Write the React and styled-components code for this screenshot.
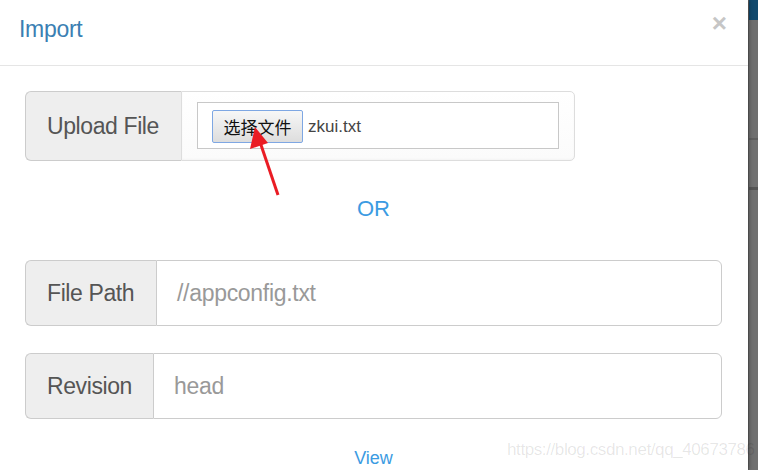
import styled, { createGlobalStyle } from "styled-components";

const Global = createGlobalStyle`
  html, body {
    margin: 0;
    padding: 0;
    background: #6f6f6f;
  }
  body {
    font-family: "Liberation Sans", Arial, "Noto Sans CJK SC", sans-serif;
  }
`;

const Page = styled.div`
  position: relative;
  width: 758px;
  height: 470px;
  display: flex;
  overflow: hidden;
`;

const Modal = styled.div`
  width: 748px;
  height: 100%;
  background: #fff;
  box-shadow: 1px 0 4px rgba(0, 0, 0, 0.35);
  display: flex;
  flex-direction: column;
  position: relative;
  z-index: 1;
`;

const Header = styled.div`
  height: 65px;
  border-bottom: 1px solid #e5e5e5;
  display: flex;
  align-items: center;
  justify-content: space-between;
  padding: 0 21px 0 19px;
`;

const Title = styled.h4`
  margin: 0;
  font-size: 23px;
  font-weight: normal;
  color: #3b7fb3;
  letter-spacing: -0.3px;
  margin-top: -6px;
`;

const Close = styled.span`
  font-size: 26px;
  font-weight: bold;
  color: #c6c6c6;
  margin-top: -19px;
`;

const Body = styled.div`
  padding: 25px 26px 0 25px;
  display: flex;
  flex-direction: column;
`;

const Group = styled.div`
  display: flex;
  height: ${(p) => p.$h}px;
  width: ${(p) => (p.$w ? `${p.$w}px` : "auto")};
  margin-top: ${(p) => p.$mt || 0}px;
`;

const Addon = styled.div`
  width: ${(p) => p.$w}px;
  flex: none;
  box-sizing: border-box;
  background: #eeeeee;
  border: 1px solid #cccccc;
  border-right: none;
  border-radius: 6px 0 0 6px;
  display: flex;
  align-items: center;
  padding-left: 21px;
  font-size: 23px;
  letter-spacing: -0.4px;
  color: #555;
`;

const FileBox = styled.div`
  flex: 1;
  border: 1px solid #dddddd;
  border-radius: 0 5px 5px 0;
  background: linear-gradient(#ffffff, #fbfbfb);
  box-shadow: inset 0 -1px 2px rgba(0, 0, 0, 0.03);
  padding: 10px 15px 11px 15px;
  display: flex;
`;

const FileInput = styled.div`
  flex: 1;
  border: 1px solid #c8c8c8;
  background: #fff;
  display: flex;
  align-items: center;
  padding-left: 14px;
  padding-top: 2px;
  gap: 5px;
`;

const PickButton = styled.button`
  width: 91px;
  height: 33px;
  box-sizing: border-box;
  border: 1px solid #7ea7e3;
  border-radius: 2px;
  background: linear-gradient(#f7f7f7, #dddddd);
  font-family: "Noto Sans CJK SC", sans-serif;
  font-size: 17px;
  color: #111;
  padding: 0;
  line-height: 1;
`;

const FileName = styled.span`
  font-size: 17px;
  color: #444;
`;

const TextInput = styled.div`
  flex: 1;
  border: 1px solid #cccccc;
  border-radius: 0 6px 6px 0;
  display: flex;
  align-items: center;
  padding-left: ${(p) => p.$pl}px;
  font-size: 23px;
  letter-spacing: -0.3px;
  color: #999;
`;

const Center = styled.div`
  text-align: center;
  color: #3b9be2;
  font-size: ${(p) => p.$size}px;
  margin-top: ${(p) => p.$mt}px;
  height: ${(p) => p.$h}px;
  line-height: ${(p) => p.$h}px;
`;

const Backdrop = styled.div`
  flex: 1;
  display: flex;
  flex-direction: column;
  background: #707070;
  border-left: 1px solid #5e5e5e;
`;

const Band = styled.div`
  height: ${(p) => p.$h}px;
  background: ${(p) => p.$c};
  flex: none;
`;

const Arrow = styled.svg`
  position: absolute;
  left: 240px;
  top: 120px;
  z-index: 2;
`;

const Watermark = styled.div`
  position: absolute;
  left: 507px;
  top: 440px;
  font-size: 17px;
  letter-spacing: -0.4px;
  color: rgba(0, 0, 0, 0.1);
  white-space: nowrap;
  z-index: 2;
`;

export default function App() {
  return (
    <Page>
      <Global />
      <Modal>
        <Header>
          <Title>Import</Title>
          <Close>×</Close>
        </Header>
        <Body>
          <Group $h={70} $w={550}>
            <Addon $w={156}>Upload File</Addon>
            <FileBox>
              <FileInput>
                <PickButton>选择文件</PickButton>
                <FileName>zkui.txt</FileName>
              </FileInput>
            </FileBox>
          </Group>
          <Center $size={22} $mt={36} $h={24}>OR</Center>
          <Group $h={66} $mt={39}>
            <Addon $w={131}>File Path</Addon>
            <TextInput $pl={20}>//appconfig.txt</TextInput>
          </Group>
          <Group $h={66} $mt={27}>
            <Addon $w={128}>Revision</Addon>
            <TextInput $pl={20}>head</TextInput>
          </Group>
          <Center $size={18} $mt={28} $h={22}>View</Center>
        </Body>
      </Modal>
      <Backdrop>
        <Band $h={20} $c="#11496d" />
        <Band $h={118} $c="#6f6f6f" />
        <Band $h={2} $c="#5f5f5f" />
        <Band $h={47} $c="#717171" />
        <Band $h={3} $c="#555" />
      </Backdrop>
      <Arrow width="50" height="80" viewBox="0 0 50 80">
        <line x1="38" y1="75" x2="20" y2="22" stroke="#ea1c24" strokeWidth="3" />
        <polygon points="15,7 10,29 28,23" fill="#ea1c24" />
      </Arrow>
      <Watermark>https://blog.csdn.net/qq_40673786</Watermark>
    </Page>
  );
}
